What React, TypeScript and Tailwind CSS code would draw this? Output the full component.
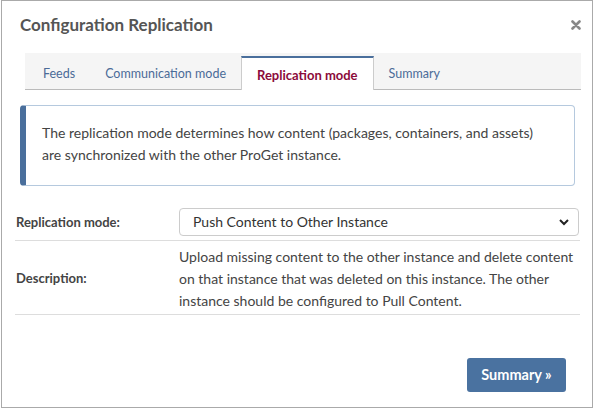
import React from 'react';

const tabs = ['Feeds', 'Communication mode', 'Replication mode', 'Summary'];

const App: React.FC = () => {
  const active = 'Replication mode';

  return (
    <div
      className="w-[594px] h-[408px] bg-white text-[#333] overflow-hidden"
      style={{ fontFamily: 'Lato, "Noto Sans", sans-serif' }}
    >
      <div className="h-[408px] ml-px mr-px border border-[#aaa] flex flex-col">
        {/* header */}
        <div className="flex items-center justify-between pl-[18px] pr-[11px] pt-[7px] h-[40px]">
          <h1 className="text-[17px] font-bold text-[#555]">Configuration Replication</h1>
          <svg width="10" height="10" viewBox="0 0 10 10" className="mt-[1px]">
            <path d="M1.5 1.5 L8.5 8.5 M8.5 1.5 L1.5 8.5" stroke="#888" strokeWidth="2.6" strokeLinecap="round" />
          </svg>
        </div>

        {/* tabs */}
        <div className="ml-[23px] mr-[11px] mt-[12px] h-[37px] pl-[3px] bg-[#f5f5f5] border-b border-[#bbb] flex items-end text-[12.5px]">
          {tabs.map((t) => (
            <div
              key={t}
              className={
                t === active
                  ? 'h-[34px] -mb-px px-[15px] pt-[3px] bg-white border-t-2 border-t-[#4a6f9c] border-x border-x-[#ccc] flex items-center font-bold text-[13px] text-[#8b0a3a]'
                  : 'h-[34px] px-[15px] pt-[4px] flex items-center text-[#4b6b98]'
              }
            >
              {t}
            </div>
          ))}
        </div>

        {/* info */}
        <div className="ml-[18px] mr-[17px] mt-[15px] h-[81px] border border-[#b5c9de] border-l-[6px] border-l-[#4a6f9c] rounded-[4px] pl-[16px] pr-[32px] pt-[16px] text-[14px] leading-[22px] text-[#444]">
          The replication mode determines how content (packages, containers, and assets) are synchronized with the other ProGet instance.
        </div>

        {/* form */}
        <div className="ml-[13px] mr-[12px] mt-[20px] text-[14px]">
          <div className="flex items-center h-[35px] border-b border-[#ddd] pb-[1px]">
            <div className="w-[164px] pl-[1px] font-bold text-[13px] text-[#444]">Replication mode:</div>
            <div className="flex-1 pr-[1px]">
              <div className="h-[28px] border border-[#ccc] rounded-[4px] flex items-center justify-between pl-[13px] pr-[8px] text-[#333] -mt-[2px]">
                <span>Push Content to Other Instance</span>
                <svg width="12" height="12" viewBox="0 0 12 12">
                  <path d="M2 4 L6 8 L10 4" fill="none" stroke="#222" strokeWidth="2" />
                </svg>
              </div>
            </div>
          </div>
          <div className="flex items-center h-[74px] border-b border-[#ddd] pt-[3px]">
            <div className="w-[164px] pl-[1px] font-bold text-[13px] text-[#444]">Description:</div>
            <div className="flex-1 leading-[22px] text-[#444]">
              Upload missing content to the other instance and delete content on that instance that was deleted on this instance. The other instance should be configured to Pull Content.
            </div>
          </div>
        </div>

        {/* footer */}
        <div className="flex justify-end mt-[43px] mr-[26px]">
          <button className="h-[34px] w-[99px] rounded-[3px] bg-[#4a72a0] text-white font-bold text-[14.5px]">
            Summary »
          </button>
        </div>
      </div>
    </div>
  );
};

export default App;
